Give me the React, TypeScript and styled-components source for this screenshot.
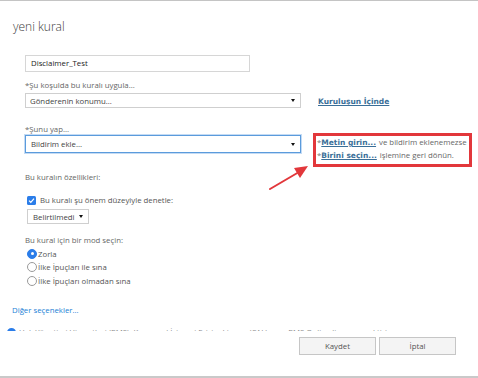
import React from "react";
import styled, { createGlobalStyle } from "styled-components";

const GlobalStyle = createGlobalStyle`
  html, body {
    margin: 0;
    padding: 0;
    background: #ffffff;
  }
  body {
    font-family: "Open Sans", "Noto Sans", sans-serif;
    color: #555555;
  }
  * {
    box-sizing: border-box;
  }
`;

const Dialog = styled.div`
  position: relative;
  width: 478px;
  height: 378px;
  border-top: 1px solid #c4c4c4;
  border-bottom: 2px solid #c9c9c9;
  display: flex;
  flex-direction: column;
  background: #ffffff;
`;

const ScrollArea = styled.div`
  height: 330px;
  flex: none;
  overflow: hidden;
  padding-left: 12px;
`;

const Title = styled.h1`
  margin: 15px 0 0 1px;
  font-size: 12px;
  font-weight: 300;
  line-height: 22px;
  color: #3a3a3a;
`;

const Form = styled.div`
  display: flex;
  flex-direction: column;
  padding-left: 13px;
`;

const Label = styled.div<{ $mt: number }>`
  margin-top: ${({ $mt }) => $mt}px;
  font-size: 7.8px;
  line-height: 11px;
  color: #666666;
  white-space: nowrap;
`;

const TextBox = styled.div`
  margin-top: 17px;
  width: 225px;
  height: 17px;
  border: 1px solid #d6d6d6;
  padding: 0 5px;
  font-size: 7.8px;
  line-height: 15px;
  color: #222222;
`;

const Row = styled.div<{ $mt: number }>`
  margin-top: ${({ $mt }) => $mt}px;
  display: flex;
  align-items: flex-start;
`;

const Select = styled.div<{ $focused?: boolean; $width: number }>`
  width: ${({ $width }) => $width}px;
  height: ${({ $focused }) => ($focused ? 18 : 15)}px;
  flex: none;
  display: flex;
  align-items: center;
  justify-content: space-between;
  padding: 0 5px 0 ${({ $focused }) => ($focused ? 5 : 4)}px;
  border: 1px solid ${({ $focused }) => ($focused ? "#5b9bdc" : "#cfcfcf")};
  box-shadow: ${({ $focused }) => ($focused ? "0 0 0 1px #c4dbf4" : "none")};
  font-size: 7.8px;
  color: #444444;
  white-space: nowrap;
`;

const Caret = styled.span`
  width: 0;
  height: 0;
  border-left: 2.5px solid transparent;
  border-right: 2.5px solid transparent;
  border-top: 3px solid #111111;
`;

const SideLink = styled.a`
  margin: 4px 0 0 17px;
  font-family: "DejaVu Sans", Verdana, sans-serif;
  font-size: 7.5px;
  font-weight: bold;
  line-height: 10px;
  color: #3a6f98;
  text-decoration: underline;
  white-space: nowrap;
`;

const NoteBox = styled.div`
  margin: -2px 0 -14px 12px;
  width: 159px;
  padding: 0 0 2px 1px;
  border: 3px solid #e2373b;
  font-size: 7.8px;
  line-height: 12px;
  color: #666666;
  white-space: nowrap;
`;

const NoteLink = styled.a`
  font-family: "DejaVu Sans", Verdana, sans-serif;
  font-size: 7.5px;
  font-weight: bold;
  color: #3a6f98;
  text-decoration: underline;
  margin-right: 3px;
`;

const Star = styled.span`
  color: #777777;
`;

const CheckRow = styled.div`
  margin-top: 12px;
  padding-left: 2px;
  display: flex;
  align-items: center;
  gap: 4px;
  font-size: 7.8px;
  line-height: 11px;
  color: #555555;
`;

const CheckBox = styled.span`
  width: 9px;
  height: 9px;
  border-radius: 1.5px;
  background: #2b7de9;
  display: flex;
  align-items: center;
  justify-content: center;
`;

const SmallSelect = styled(Select)`
  margin: 3px 0 0 2px;
  padding-left: 5px;
`;

const RadioList = styled.div`
  margin-top: 1px;
  padding-left: 2px;
  display: flex;
  flex-direction: column;
`;

const RadioRow = styled.div`
  height: 13.5px;
  display: flex;
  align-items: center;
  gap: 1px;
  font-size: 7.8px;
  color: #555555;
  white-space: nowrap;
`;

const Radio = styled.span<{ $on?: boolean }>`
  width: 10px;
  height: 10px;
  border-radius: 50%;
  flex: none;
  border: 1px solid ${({ $on }) => ($on ? "#2b7de9" : "#9a9a9a")};
  background: ${({ $on }) => ($on ? "#2b7de9" : "#ffffff")};
  display: flex;
  align-items: center;
  justify-content: center;
  &::after {
    content: "";
    width: 3px;
    height: 3px;
    border-radius: 50%;
    background: ${({ $on }) => ($on ? "#ffffff" : "transparent")};
  }
`;

const MoreLink = styled.a`
  display: block;
  margin-top: 17px;
  font-size: 7.8px;
  line-height: 11px;
  color: #1b7fd6;
  text-decoration: none;
`;

const InfoRow = styled.div`
  margin: 11px 0 0 -5px;
  display: flex;
  align-items: flex-start;
  gap: 3px;
  font-size: 7.8px;
  line-height: 11px;
  color: #888888;
  white-space: nowrap;
`;

const InfoDot = styled.span`
  margin-top: 1px;
  width: 9px;
  height: 9px;
  flex: none;
  border-radius: 50%;
  background: #2b7de9;
`;

const Footer = styled.div`
  flex: 1;
  display: flex;
  justify-content: flex-end;
  align-items: flex-start;
  gap: 3px;
  padding: 6px 22px 0 0;
`;

const Button = styled.button`
  width: 77px;
  height: 18px;
  border: 1px solid #c6c6c6;
  background: #f4f4f4;
  font-family: "Open Sans", "Noto Sans", sans-serif;
  font-size: 7.8px;
  color: #555555;
  padding: 0;
`;

const Arrow = styled.svg`
  position: absolute;
  left: 266px;
  top: 160px;
`;

export default function App() {
  return (
    <>
      <GlobalStyle />
      <Dialog>
        <ScrollArea>
          <Title>yeni kural</Title>
          <Form>
            <TextBox>Disclaimer_Test</TextBox>
            <Label $mt={8}>*Şu koşulda bu kuralı uygula...</Label>
            <Row $mt={2}>
              <Select $width={276}>
                Gönderenin konumu...
                <Caret />
              </Select>
              <SideLink>Kuruluşun İçinde</SideLink>
            </Row>
            <Label $mt={16}>*Şunu yap...</Label>
            <Row $mt={0}>
              <Select $width={276} $focused>
                Bildirim ekle...
                <Caret />
              </Select>
              <NoteBox>
                <div>
                  <Star>*</Star>
                  <NoteLink>Metin girin...</NoteLink>ve bildirim eklenemezse
                </div>
                <div>
                  <Star>*</Star>
                  <NoteLink>Birini seçin...</NoteLink>işlemine geri dönün.
                </div>
              </NoteBox>
            </Row>
            <Label $mt={19}>Bu kuralın özellikleri:</Label>
            <CheckRow>
              <CheckBox>
                <svg width="7" height="7" viewBox="0 0 7 7">
                  <path d="M1 3.6 L2.8 5.3 L6 1.6" fill="none" stroke="#fff" strokeWidth="1.2" />
                </svg>
              </CheckBox>
              Bu kuralı şu önem düzeyiyle denetle:
            </CheckRow>
            <Row $mt={0}>
              <SmallSelect $width={62}>
                Belirtilmedi
                <Caret />
              </SmallSelect>
            </Row>
            <Label $mt={11}>Bu kural için bir mod seçin:</Label>
            <RadioList>
              <RadioRow>
                <Radio $on />
                Zorla
              </RadioRow>
              <RadioRow>
                <Radio />
                İlke İpuçları ile sına
              </RadioRow>
              <RadioRow>
                <Radio />
                İlke İpuçları olmadan sına
              </RadioRow>
            </RadioList>
          </Form>
          <MoreLink>Diğer seçenekler...</MoreLink>
          <InfoRow>
            <InfoDot />
            Hak Yönetimi Hizmetleri (RMS), Kurumsal İstemci Erişim Lisansı (CAL) veya RMS Online lisansı gerektirir.
          </InfoRow>
        </ScrollArea>
        <Footer>
          <Button>Kaydet</Button>
          <Button>İptal</Button>
        </Footer>
        <Arrow width="46" height="32" viewBox="0 0 46 32">
          <line x1="4" y1="28" x2="33" y2="11" stroke="#e2373b" strokeWidth="2" strokeLinecap="round" />
          <polygon points="42,5 28,7 34,17" fill="#e2373b" />
        </Arrow>
      </Dialog>
    </>
  );
}
